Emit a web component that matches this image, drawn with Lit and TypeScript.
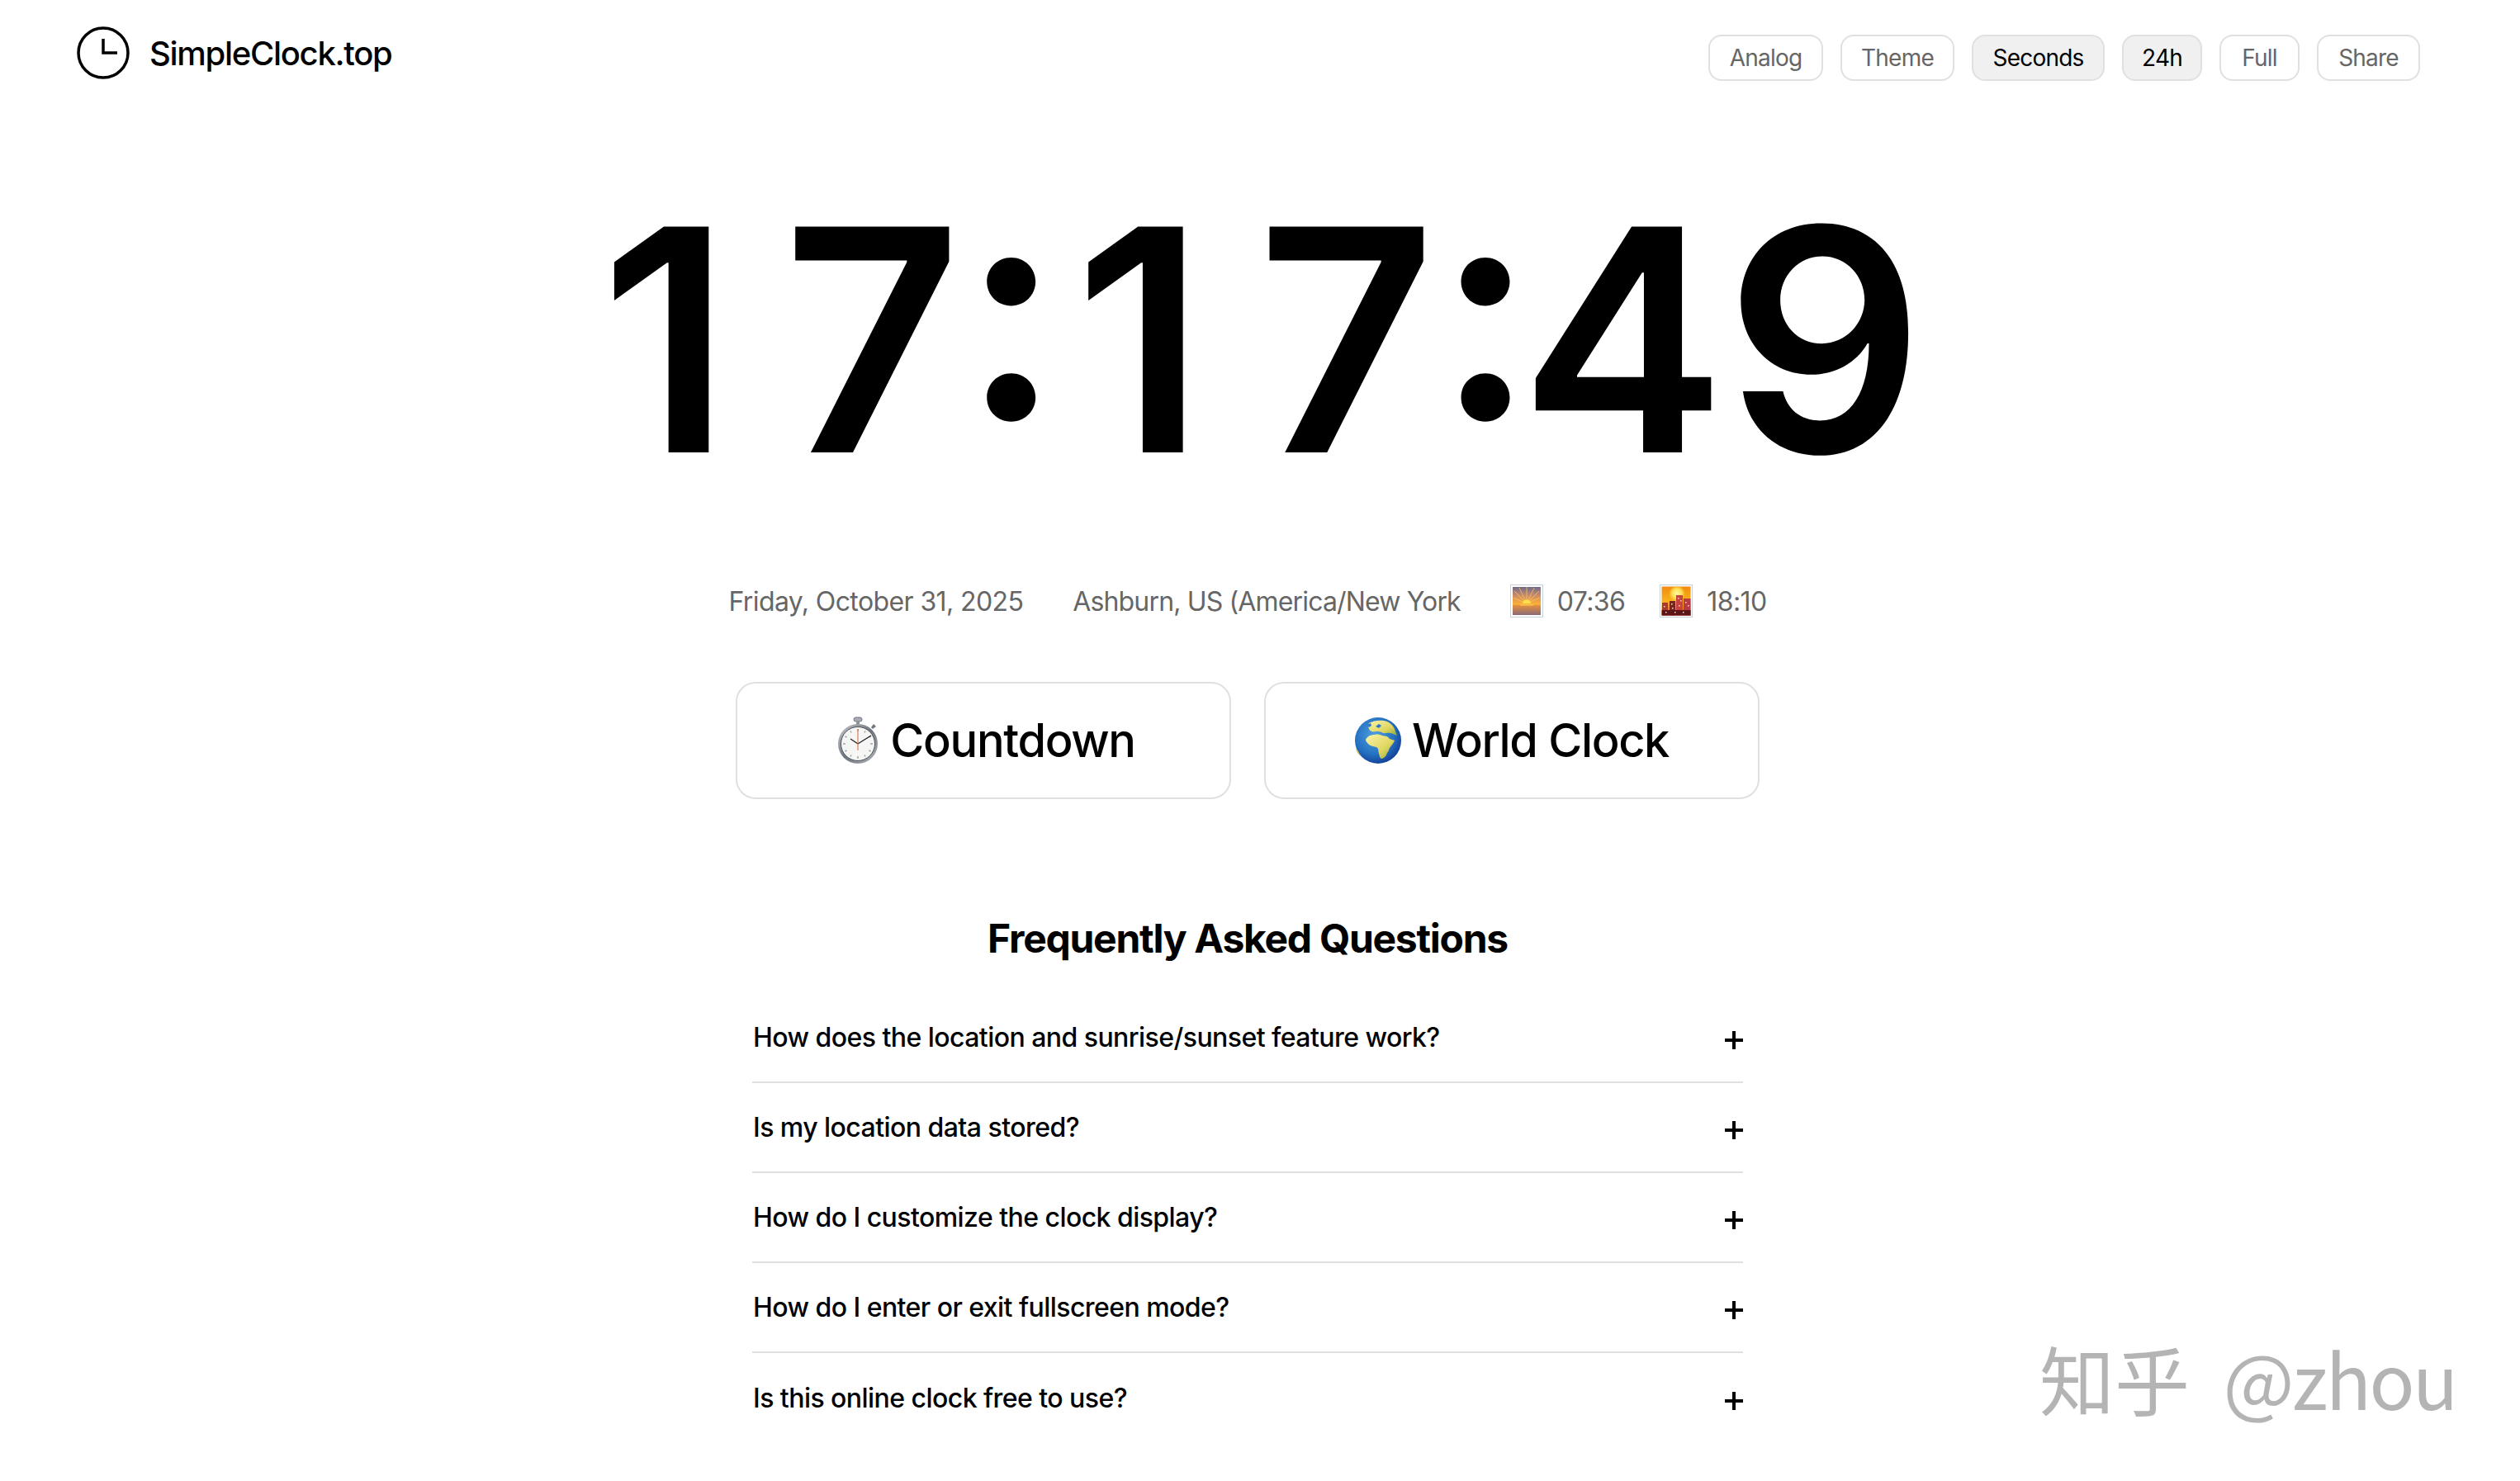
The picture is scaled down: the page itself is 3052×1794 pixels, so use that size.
import { LitElement, html, css } from "lit";
import { customElement } from "lit/decorators.js";

const sunrise = html`<svg class="emoji-sq" viewBox="0 0 40 40">
  <defs>
    <linearGradient id="sky" x1="0" y1="0" x2="0" y2="1">
      <stop offset="0" stop-color="#6e6a8c"/><stop offset=".3" stop-color="#c98a6a"/>
      <stop offset=".55" stop-color="#f6a83c"/><stop offset=".63" stop-color="#f9b23a"/>
      <stop offset=".64" stop-color="#e8913e"/><stop offset="1" stop-color="#8a6a78"/>
    </linearGradient>
  </defs>
  <rect x=".5" y=".5" width="39" height="39" fill="#fff" stroke="#c8d2da"/>
  <rect x="3" y="3" width="34" height="34" fill="url(#sky)"/>
  <g stroke="#fbc860" stroke-width="1" opacity=".75">
    <path d="M20 23 5 8M20 23 11 4M20 23V3M20 23 29 4M20 23 35 8M20 23 4 16M20 23 36 16"/>
  </g>
  <path d="M15 23a5 4.5 0 0 1 10 0z" fill="#ffe04a"/>
  <rect x="12" y="24" width="16" height="1.6" fill="#f7c24a"/>
</svg>`;

const city = html`<svg class="emoji-sq" viewBox="0 0 40 40">
  <defs>
    <linearGradient id="dusk" x1="0" y1="0" x2="0" y2="1">
      <stop offset="0" stop-color="#f28a12"/><stop offset=".5" stop-color="#f8b21c"/><stop offset="1" stop-color="#e8601c"/>
    </linearGradient>
    <radialGradient id="sun" cx=".5" cy=".5" r=".5">
      <stop offset="0" stop-color="#fff8a8"/><stop offset=".6" stop-color="#ffe050"/><stop offset="1" stop-color="#ffd040" stop-opacity="0"/>
    </radialGradient>
  </defs>
  <rect x=".5" y=".5" width="39" height="39" fill="#fff" stroke="#c8d2da"/>
  <rect x="2.500" y="2.500" width="35" height="35" fill="url(#dusk)"/>
  <circle cx="21" cy="11" r="10" fill="url(#sun)"/>
  <rect x="20" y="13" width="8" height="24.500" fill="#c8423e"/>
  <rect x="29" y="17" width="8.500" height="20.500" fill="#b83a44"/>
  <rect x="12" y="20" width="7" height="17.500" fill="#7a2420"/>
  <rect x="3" y="22" width="7" height="15.500" fill="#a83830"/>
  <rect x="2.500" y="31" width="35" height="6.500" fill="#5c1418"/>
  <g fill="#ffe0c0">
    <rect x="14" y="23" width="1.500" height="1.500"/><rect x="15" y="28" width="1.500" height="1.500"/>
    <rect x="22" y="16" width="1.500" height="1.500"/><rect x="25" y="19" width="1.500" height="1.500"/><rect x="23" y="25" width="1.500" height="1.500"/>
    <rect x="31" y="21" width="1.500" height="1.500"/><rect x="34" y="25" width="1.500" height="1.500"/><rect x="5" y="26" width="1.500" height="1.500"/>
    <rect x="7" y="33" width="1.500" height="1.500"/><rect x="18" y="33" width="1.500" height="1.500"/><rect x="28" y="33" width="1.500" height="1.500"/>
  </g>
</svg>`;

const stopwatch = html`<svg class="emoji-watch" viewBox="0 0 50 58">
  <defs>
    <linearGradient id="ring" x1="0" y1="0" x2="1" y2="1">
      <stop offset="0" stop-color="#c8ccd2"/><stop offset=".5" stop-color="#6d737c"/><stop offset="1" stop-color="#b4b8bf"/>
    </linearGradient>
  </defs>
  <rect x="19" y="1" width="10" height="5" rx="2.500" fill="#a8acb4" stroke="#70757e"/>
  <rect x="22" y="5" width="4" height="5" fill="#8e939c"/>
  <path d="M40 13l3-4 3 3-4 3z" fill="#70757e"/>
  <circle cx="24" cy="33" r="24" fill="url(#ring)"/>
  <circle cx="24" cy="33" r="20.500" fill="#f6f6f4" stroke="#50555e"/>
  <g stroke="#a0a4a8" stroke-width="1.500">
    <path d="M24 15v3M24 48v3M6 33h3M39 33h3M15 17.500l1 2M33 17.500l-1 2M15 48.500l1-2M33 48.500l-1-2M8.500 24l2 1M39.500 24l-2 1M8.500 42l2-1M39.500 42l-2-1"/>
  </g>
  <path d="M24 33 15 27M24 33 40 23" stroke="#22252c" stroke-width="1.400" fill="none"/>
  <path d="M24 15v26" stroke="#d8683a" stroke-width="1"/>
</svg>`;

const globe = html`<svg class="emoji-globe" viewBox="0 0 56 56">
  <defs>
    <radialGradient id="sea" cx=".42" cy=".38" r=".65">
      <stop offset="0" stop-color="#4fa0de"/><stop offset=".65" stop-color="#2470c2"/><stop offset="1" stop-color="#123e94"/>
    </radialGradient>
    <linearGradient id="land" x1="0" y1="0" x2="1" y2="1">
      <stop offset="0" stop-color="#faf3a8"/><stop offset=".6" stop-color="#e0d662"/><stop offset="1" stop-color="#8aa838"/>
    </linearGradient>
  </defs>
  <circle cx="28" cy="28" r="28" fill="url(#sea)"/>
  <path d="M13 27c2-4 6-6 11-6 3-1 7 0 9 1 3 1 6 0 8 3 2 2 6 2 7 3-1 3-4 6-6 9-1 2-1 4-3 6-1 3-2 5-6 7-3 0-3-3-4-6-1-4 0-6-3-8-3-1-6-1-9-3-2-2-4-4-4-6z" fill="url(#land)"/>
  <path d="M17 7c5-3 12-4 18-3 6 1 11 5 13 10 1 3 2 6 3 8-3-1-6-3-9-3-3-1-5 1-8 0-3-2-6-2-9-2-3 1-7 0-8-3-1-2-1-5 0-7z" fill="url(#land)"/>
  <path d="M25 11l4-3 3 2-3 3zM15 9l4-2 1 3-3 2z" fill="#2b78c8"/>
  <path d="M1 38c3 1 4 6 6 9-3-2-5-5-6-9z" fill="#cfc860"/>
</svg>`;

const clockIcon = html`<svg class="logo-icon" viewBox="0 0 64 64" fill="none" stroke="#000" stroke-width="3.500">
  <circle cx="32" cy="32" r="30"/>
  <path d="M32 15v17h17" />
</svg>`;

const faqs = [
  "How does the location and sunrise/sunset feature work?",
  "Is my location data stored?",
  "How do I customize the clock display?",
  "How do I enter or exit fullscreen mode?",
  "Is this online clock free to use?",
];

const buttons: [string, boolean, number][] = [
  ["Analog", false, 139], ["Theme", false, 138], ["Seconds", true, 161],
  ["24h", true, 97], ["Full", false, 97], ["Share", false, 125],
];

const clockCells: [string, number][] = [
  ["1", 237.5], ["7", 262.8], [":", 74], ["1", 237.5], ["7", 262.8], [":", 74], ["4", 258.9], ["9", 229.7],
];

@customElement("app-root")
export class AppRoot extends LitElement {
  static styles = css`
    :host {
      display: block; height: 1794px; overflow: hidden; position: relative;
      background: #fff; color: #000;
      font-family: Inter, "Noto Sans CJK SC", sans-serif;
    }
    .page { width: 3022px; display: flex; flex-direction: column; align-items: center; }
    header {
      width: 100%; box-sizing: border-box; height: 128px;
      display: flex; justify-content: space-between; align-items: center;
      padding: 0 91px 0 93px;
    }
    .brand { display: flex; align-items: center; gap: 24px; font-size: 40px; font-weight: 500; letter-spacing: -1.3px; }
    .logo-icon { width: 64px; height: 64px; display: block; }
    .btns { display: flex; gap: 21px; margin-top: 12px; }
    .btn {
      height: 56px; box-sizing: border-box; display: flex; align-items: center; justify-content: center;
      border: 2px solid #e0e0e0; border-radius: 16px; font-size: 28px; color: #666; background: #fff;
      letter-spacing: -0.8px;
    }
    .btn.on { background: #f0f0f0; color: #000; }
    .clock {
      margin: 84px 10px 0 0; height: 400px; line-height: 400px; font-size: 376px; font-weight: 600;
      font-optical-sizing: none; white-space: nowrap; display: flex;
    }
    .cell { display: flex; justify-content: center; }
    .cell.colon span { font-feature-settings: "case"; letter-spacing: -40px; padding-right: 40px; }
    .meta { margin-top: 92px; height: 48px; display: flex; align-items: center; font-size: 32px; color: #666; white-space: nowrap; letter-spacing: -0.6px; }
    .loc { margin-left: 60px; letter-spacing: -0.85px; }
    .sun { display: flex; align-items: center; gap: 17px; }
    .sun.a { margin-left: 60px; }
    .sun.b { margin-left: 42px; }
    .emoji-sq { width: 40px; height: 40px; display: block; }
    .cards { margin-top: 74px; display: flex; gap: 40px; }
    .card {
      width: 600px; height: 142px; box-sizing: border-box; border: 2px solid #e0e0e0; border-radius: 24px;
      display: flex; align-items: center; justify-content: center; gap: 13px;
      font-size: 56px; font-weight: 500; letter-spacing: -1.35px;
    }
    .card.first { padding-left: 8px; }
    .emoji-watch { width: 50px; height: 58px; display: block; }
    .emoji-globe { width: 56px; height: 56px; display: block; }
    h2 { margin: 140px 0 0; font-size: 48px; line-height: 58px; font-weight: 700; letter-spacing: -1.27px; }
    .faq { margin-top: 37px; width: 1200px; }
    .row {
      height: 109px; box-sizing: border-box; border-bottom: 2px solid #e0e0e0;
      display: flex; justify-content: space-between; align-items: center;
      font-size: 32px; font-weight: 500; letter-spacing: -0.55px; padding-left: 1px;
    }
    .row:last-child { border-bottom: none; }
    .plus { width: 22px; height: 22px; margin-top: 6px; display: block; }
    .mark {
      position: absolute; left: 2470px; top: 1608px; white-space: nowrap;
      font-family: "Noto Sans CJK SC", "Noto Sans", sans-serif; font-size: 91px; color: #b4b4b4; line-height: 120px;
      word-spacing: 20px;
    }
    .mark span { letter-spacing: -2.5px; }
  `;

  render() {
    return html`<div class="page">
      <header>
        <div class="brand">${clockIcon}<span>SimpleClock.top</span></div>
        <div class="btns">${buttons.map(([t, on, w]) => html`<div class="btn ${on ? "on" : ""}" style="width:${w}px">${t}</div>`)}</div>
      </header>
      <div class="clock">${clockCells.map(([c, w]) => html`<span class="cell ${c === ":" ? "colon" : ""}" style="width:${w}px"><span>${c}</span></span>`)}</div>
      <div class="meta">
        <span>Friday, October 31, 2025</span>
        <span class="loc">Ashburn, US (America/New York</span>
        <span class="sun a">${sunrise}<span>07:36</span></span>
        <span class="sun b">${city}<span>18:10</span></span>
      </div>
      <div class="cards">
        <div class="card first">${stopwatch}<span>Countdown</span></div>
        <div class="card">${globe}<span>World Clock</span></div>
      </div>
      <h2>Frequently Asked Questions</h2>
      <div class="faq">
        ${faqs.map((q) => html`<div class="row"><span>${q}</span>
          <svg class="plus" viewBox="0 0 22 22" stroke="#000" stroke-width="4"><path d="M11 0v22M0 11h22"/></svg></div>`)}
      </div>
    </div>
    <div class="mark">知乎 <span>@zhou</span></div>`;
  }
}
